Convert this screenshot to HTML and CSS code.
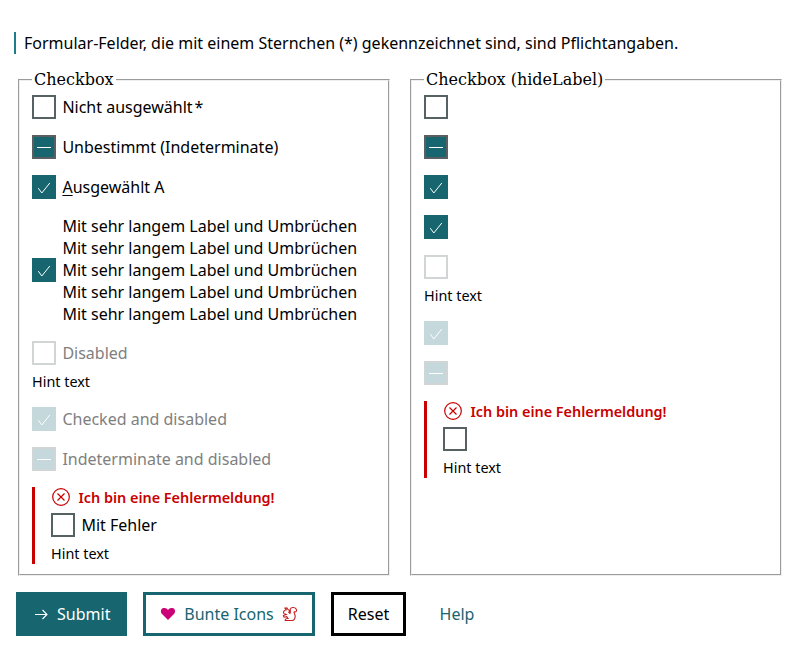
FILE: index.html
```
<!DOCTYPE html>
<html lang="de">
<head>
<meta charset="utf-8">
<title>Checkbox</title>
<link rel="stylesheet" href="styles.css">
</head>
<body>
<svg class="defs" aria-hidden="true">
  <symbol id="check" viewBox="0 0 24 24"><path d="M6.3 13.2 9.8 18 17.8 8"/></symbol>
  <symbol id="dash" viewBox="0 0 24 24"><path d="M5 12.5H19"/></symbol>
  <symbol id="error" viewBox="0 0 18 18"><circle cx="9" cy="9" r="8.3"/><path d="m5.5 5.5 7 7m0-7-7 7"/></symbol>
</svg>
<form class="form">
  <p class="intro">Formular-Felder, die mit einem Sternchen (*) gekennzeichnet sind, sind Pflichtangaben.</p>
  <div class="columns">
    <fieldset class="group">
      <legend>Checkbox</legend>
      <div class="fields">
        <label class="row"><span class="box"></span><span>Nicht ausgewählt<span class="star">*</span></span></label>
        <label class="row"><span class="box mixed"><svg><use href="#dash"/></svg></span><span>Unbestimmt (Indeterminate)</span></label>
        <label class="row"><span class="box checked"><svg><use href="#check"/></svg></span><span><u>A</u>usgewählt A</span></label>
        <label class="row"><span class="box checked"><svg><use href="#check"/></svg></span><span>Mit sehr langem Label und Umbrüchen<br>Mit sehr langem Label und Umbrüchen<br>Mit sehr langem Label und Umbrüchen<br>Mit sehr langem Label und Umbrüchen<br>Mit sehr langem Label und Umbrüchen</span></label>
        <div>
          <label class="row disabled"><span class="box"></span><span>Disabled</span></label>
          <div class="hint">Hint text</div>
        </div>
        <label class="row disabled"><span class="box checked"><svg><use href="#check"/></svg></span><span>Checked and disabled</span></label>
        <label class="row disabled"><span class="box mixed"><svg><use href="#dash"/></svg></span><span>Indeterminate and disabled</span></label>
        <div class="invalid">
          <div class="message"><svg><use href="#error"/></svg><span>Ich bin eine Fehlermeldung!</span></div>
          <label class="row"><span class="box"></span><span>Mit Fehler</span></label>
          <div class="hint">Hint text</div>
        </div>
      </div>
    </fieldset>
    <fieldset class="group">
      <legend>Checkbox (hideLabel)</legend>
      <div class="fields">
        <label class="row"><span class="box"></span></label>
        <label class="row"><span class="box mixed"><svg><use href="#dash"/></svg></span></label>
        <label class="row"><span class="box checked"><svg><use href="#check"/></svg></span></label>
        <label class="row"><span class="box checked"><svg><use href="#check"/></svg></span></label>
        <div>
          <label class="row disabled"><span class="box"></span></label>
          <div class="hint">Hint text</div>
        </div>
        <label class="row disabled"><span class="box checked"><svg><use href="#check"/></svg></span></label>
        <label class="row disabled"><span class="box mixed"><svg><use href="#dash"/></svg></span></label>
        <div class="invalid">
          <div class="message"><svg><use href="#error"/></svg><span>Ich bin eine Fehlermeldung!</span></div>
          <label class="row"><span class="box"></span></label>
          <div class="hint">Hint text</div>
        </div>
      </div>
    </fieldset>
  </div>
  <div class="actions">
    <button type="button" class="btn primary"><svg viewBox="0 0 16 16"><path d="M2 8.5H14M9.5 4l4.5 4.5L9.5 13"/></svg>Submit</button>
    <button type="button" class="btn secondary"><svg class="heart" viewBox="0 0 16 16"><path d="M8 14 1.8 7.8C.2 6 .8 2.6 3.6 2.1 5.6 1.7 7 2.6 8 4c1-1.400 2.400-2.300 4.400-1.900 2.800.5 3.400 3.900 1.800 5.700Z"/></svg>Bunte Icons<svg class="squirrel" viewBox="0 0 16 16"><path d="M4.300 3.800 3 2.100 4.800 1.900 6 3.500C7.500 4 7.800 5.400 6.800 6.400L8 7.500C9 6 8 4.500 8.200 3.200 9 1 13 .9 14.300 3.200 15 5 14 6.500 12.200 5.800 11.300 7 13.300 8 13.200 10.300 13.100 12.700 12 14.500 10 14.500H3.200C3 12.900 4.300 12.500 6 12.500L4.700 10.700 2 11.200 1.400 9.600 4.200 8.500 2.200 7.800C.8 6.500 1.500 4.300 4.300 3.800Z"/></svg></button>
    <button type="button" class="btn reset">Reset</button>
    <button type="button" class="btn ghost">Help</button>
  </div>
</form>
</body>
</html>
```
FILE: styles.css
```
* { box-sizing: border-box; }
body { margin: 0; background: #fff; color: #000; font: 16px/22px "Noto Sans", sans-serif; }
.defs { display: none; }
.form { padding: 32px 16px 16px; }
.intro { margin: 0 0 16px -2px; padding-left: 8px; border-left: 2px solid #1f7a8a; }
.columns { display: grid; grid-template-columns: 1fr 1fr; gap: 20px; padding: 0 2px; }
.group { min-width: 0; margin: 0; padding: 5px 12px 10px; border: 2px groove #c0c0c0; border-color: ThreeDFace; }
legend { padding: 0 2px; font: 16px/20px "DejaVu Serif", serif; }
.fields { display: flex; flex-direction: column; gap: 16px; }
.row { display: flex; align-items: center; gap: 6.400px; min-height: 24px; }
.star { margin-left: 2px; }
u { text-decoration: underline 1px; text-underline-offset: 2px; }
.box { flex: none; width: 24px; height: 24px; border: 2px solid #566164; background: #fff; }
.box svg { display: block; width: 24px; height: 24px; margin: -2px; fill: none; stroke: #fff; stroke-width: 1; }
.box.mixed { background: #17656f; border-color: #5b5f61; }
.box.checked { background: #17656f; border-color: #17656f; }
.disabled { color: #808080; }
.disabled .box { border-color: #d2d5d5; }
.disabled .box.mixed { background: #c5d8db; border-color: #d2d5d5; }
.disabled .box.checked { background: #c5d8db; border-color: #c5d8db; }
.hint { margin-top: 8px; font-size: 14.400px; line-height: 18px; }
.invalid { border-left: 3px solid #c80000; padding: 0 0 1px 16px; }
.message { display: flex; align-items: center; gap: 8.500px; height: 20px; margin-bottom: 6px; padding-left: 1px; color: #c80000; font-size: 14.400px; font-weight: 600; }
.message span { padding-top: 2px; }
.message svg { width: 18px; height: 18px; fill: none; stroke: currentColor; stroke-width: 1.2; }
.actions { display: flex; gap: 16px; margin-top: 16px; }
.btn { display: flex; align-items: center; justify-content: center; gap: 8.500px; height: 44px; padding: 0; border: 3px solid; background: #fff; font: inherit; }
.btn svg { width: 16px; height: 16px; fill: none; stroke: currentColor; stroke-width: 1.1; }
.primary { width: 111px; border-color: #17656f; background: #17656f; color: #fff; }
.secondary { width: 172px; border-color: #17656f; color: #17656f; }
.reset { width: 75px; border-color: #000; color: #000; }
.ghost { width: 70px; border-color: transparent; color: #17656f; }
.btn .heart { fill: #cc0077; stroke: none; }
.btn .squirrel { stroke: #c41e1e; }
```
